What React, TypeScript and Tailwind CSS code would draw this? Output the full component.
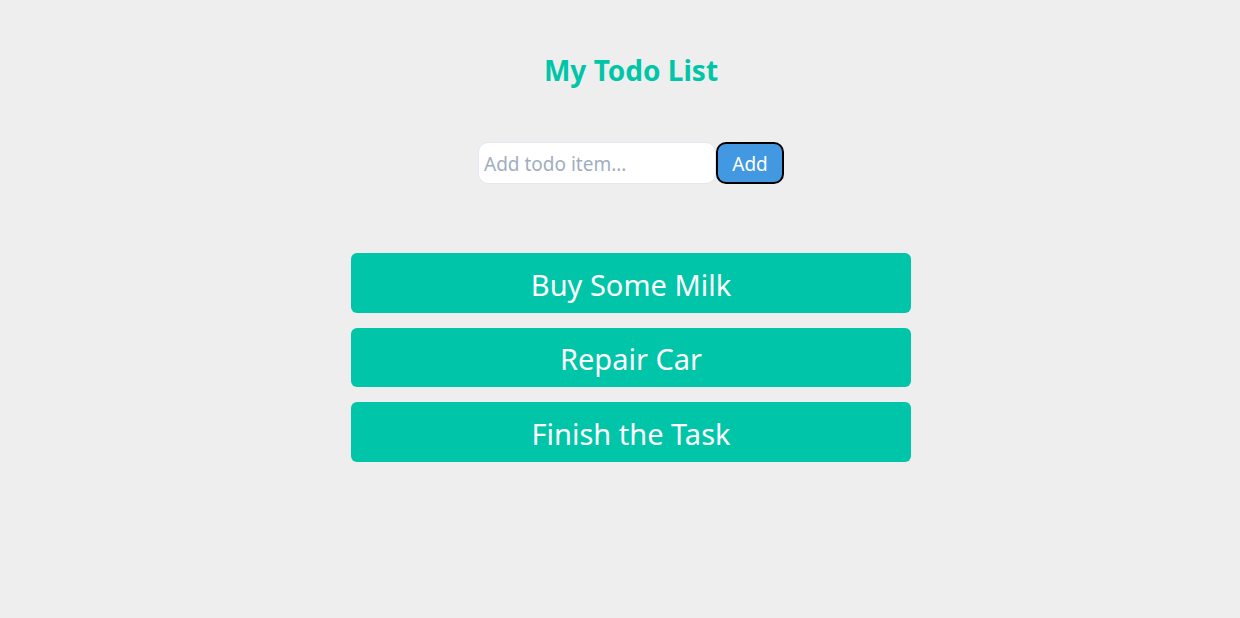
import React, { useState } from "react";

const initialTodos = ["Buy Some Milk", "Repair Car", "Finish the Task"];

export default function App() {
  const [todos, setTodos] = useState<string[]>(initialTodos);
  const [text, setText] = useState("");

  const addTodo = () => {
    if (!text.trim()) return;
    setTodos([...todos, text.trim()]);
    setText("");
  };

  return (
    <div
      className="min-h-screen bg-[#eeeeee] pl-[22px] flex flex-col items-center"
      style={{ fontFamily: '"Noto Sans", "Open Sans", sans-serif' }}
    >
      {/* Title */}
      <h1 className="mt-[50px] text-[28px] font-bold leading-[40px] text-[#00c5a8]">
        My Todo List
      </h1>

      {/* Input row */}
      <div className="mt-[52px] flex items-center">
        <input
          value={text}
          onChange={(e) => setText(e.target.value)}
          placeholder="Add todo item..."
          className="w-[238px] h-[42px] rounded-[10px] border border-[#e2e8f0] bg-white px-[5px] pt-[2px] text-[19px] text-gray-700 placeholder:text-[#a0aec0] outline-none"
        />
        <button
          onClick={addTodo}
          className="h-[42px] w-[68px] rounded-[10px] border-2 border-black bg-[#4299e1] pt-[2px] text-[19px] text-white"
        >
          Add
        </button>
      </div>

      {/* Todo items */}
      <div className="mt-[69px] flex w-[560px] flex-col gap-[15px]">
        {todos.map((todo, i) => (
          <div
            key={i}
            className="flex h-[59.5px] items-center justify-center rounded-[6px] bg-[#00c5a8] pt-[3px] text-[29px] text-white"
          >
            {todo}
          </div>
        ))}
      </div>
    </div>
  );
}
